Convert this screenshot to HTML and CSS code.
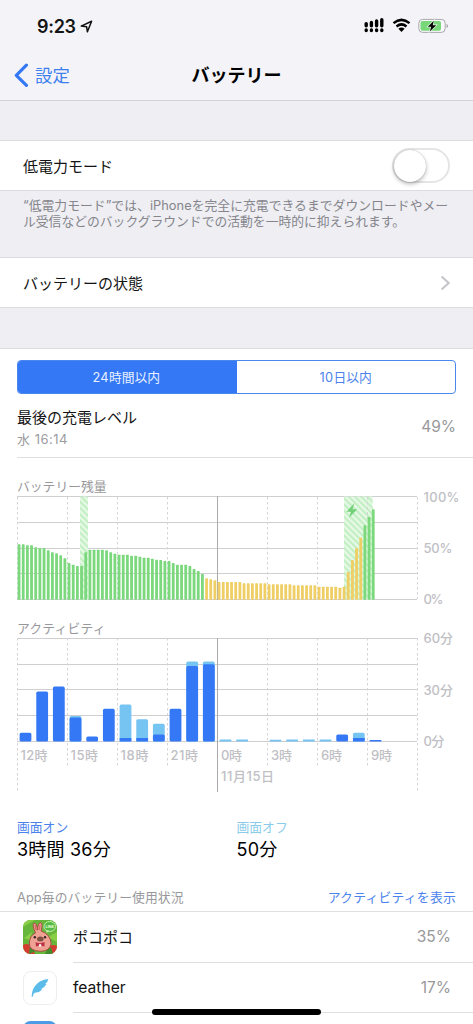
FILE: index.html
```html
<!DOCTYPE html>
<html lang="ja">
<head>
<meta charset="utf-8">
<title>バッテリー</title>
<link rel="stylesheet" href="styles.css">
</head>
<body>
<div class="screen">
  <header class="top">
    <div class="status">
      <div class="clock"><span>9:23</span>
        <svg width="13" height="13" viewBox="0 0 13 13"><path d="M1.2 6.1 11.6 1.2 7.4 11.8 6.6 6.7Z" fill="none" stroke="#111" stroke-width="1.5" stroke-linejoin="round"/></svg>
      </div>
      <div class="indicators">
        <svg width="21" height="15" viewBox="0 0 21 15"><path d="M2.2 5.6V7.8M7.4 4.5V7.8M12.6 3V7.8M17.8 1.8V7.8M2.2 12V12.6M7.4 12V12.6M12.6 12V12.6M17.8 12V12.6" stroke="#000" stroke-width="3.4" stroke-linecap="round"/></svg>
        <svg width="19" height="15" viewBox="0 0 19 15"><path d="M1.5 5.1Q9.5-1.4 17.5 5.1M4.5 8.4Q9.5 4.4 14.5 8.4" fill="none" stroke="#000" stroke-width="2.5"/><path d="M6.4 10.7Q9.5 8.3 12.6 10.7L9.5 14Z"/></svg>
        <svg width="31" height="16" viewBox="0 0 31 16"><rect x=".8" y="1.4" width="26.4" height="13" rx="3.8" fill="#f8f8fa" stroke="#a8a8ad"/><rect x="2.5" y="3.1" width="20.5" height="9.6" rx="2" fill="#78d779"/><path d="M28.5 6v4q1.7-.6 1.7-2T28.5 6Z" fill="#a8a8ad"/><path d="M15.8 2.7 9.8 8.7H13.2L11.8 13.4 18.2 7.2H14.7Z" stroke="#e9f8e9" stroke-width="1.3" paint-order="stroke"/></svg>
      </div>
    </div>
    <nav class="nav">
      <a class="back"><svg width="15" height="25" viewBox="0 0 15 25"><path d="M12.4 2.2 2.3 12.3 12.4 22.4" fill="none" stroke="#3478f6" stroke-width="3.2" stroke-linecap="round" stroke-linejoin="round"/></svg><span>設定</span></a>
      <h1>バッテリー</h1>
    </nav>
  </header>

  <section class="group first">
    <div class="row"><span>低電力モード</span><span class="switch"><span class="knob"></span></span></div>
  </section>
  <p class="note"><span class="wide">“低電力モード”では、iPhoneを完全に充電できるまでダウンロードやメー</span><br>ル受信などのバックグラウンドでの活動を一時的に抑えられます。</p>
  <section class="group">
    <div class="row"><span>バッテリーの状態</span><svg class="chevron" width="11" height="16" viewBox="0 0 11 16"><path d="M1.6 1.4 8.7 8 1.6 14.6" fill="none" stroke="#c5c5ca" stroke-width="2.1"/></svg></div>
  </section>

  <main class="usage">
    <div class="segments"><span class="selected"><b>24</b>時間以内</span><span><b>10</b>日以内</span></div>
    <div class="level">
      <div><div class="name">最後の充電レベル</div><div class="when">水 16:14</div></div>
      <span class="percent">49%</span>
    </div>
    <h2 class="charge-title">バッテリー残量</h2>
    <svg class="plot" id="charge" width="473" height="108" viewBox="0 492 473 108">
      <defs><pattern id="hatch" width="4.4" height="4.4" patternUnits="userSpaceOnUse" patternTransform="rotate(-45)"><rect width="4.4" height="4.4" fill="#e6f9e6"/><rect width="2.1" height="4.4" fill="#c2efc2"/></pattern></defs>
      <g class="grid"><path d="M17 496.5H417M17 522.5H417M17 548.5H417M17 573.5H417M17 599.5H417"/>
      <path class="dash" d="M17.5 497V599M67.5 497V599M117.5 497V599M167.5 497V599M267.5 497V599M317.5 497V599M367.5 497V599M417.5 497V599"/><path class="midnight" d="M217.5 496V600"/></g>
      <rect x="80" y="496.5" width="8" height="103" fill="url(#hatch)"/><rect x="344" y="496.5" width="28.7" height="103" fill="url(#hatch)"/>
      <path class="dash" d="M367.5 497V520"/>
      <path d="M354.3 503.3 346.5 511.7H351L349 517.7 357.2 509.2H352.5Z" fill="#71d078"/>
      <g id="charge-bars"></g>
      <g class="axis"><text x="423.5" y="501.5" textLength="36">100%</text><text x="423.5" y="553" textLength="29">50%</text><text x="423.5" y="604.3" textLength="20">0%</text></g>
    </svg>
    <h2 class="activity-title">アクティビティ</h2>
    <svg class="plot" width="473" height="157" viewBox="0 636 473 157">
      <g class="grid"><path d="M17 638.5H417M17 664.5H417M17 689.5H417M17 715.5H417M17 741.5H417"/>
      <path class="dash" d="M17.5 638V792M67.5 638V767M117.5 638V767M167.5 638V767M267.5 638V767M317.5 638V767M367.5 638V767M417.5 638V792"/><path class="midnight" d="M217.5 638V792"/></g>
      <g id="activity-bars"></g>
      <g class="axis"><text x="423.5" y="643.4" textLength="29.5">60分</text><text x="423.5" y="694.9" textLength="29.5">30分</text><text x="423.5" y="746.4" textLength="21">0分</text>
      <text x="20.5" y="760.2" textLength="27">12時</text><text x="70.5" y="760.2" textLength="27.5">15時</text><text x="120.5" y="760.2" textLength="28">18時</text><text x="170.5" y="760.2" textLength="27.5">21時</text><text x="221" y="760.2" textLength="21">0時</text><text x="271" y="760.2" textLength="21">3時</text><text x="321" y="760.2" textLength="21">6時</text><text x="371" y="760.2" textLength="21">9時</text><text x="221" y="781" textLength="53">11月15日</text></g>
    </svg>
    <div class="totals">
      <div><div class="label on">画面オン</div><div class="value">3時間 36分</div></div>
      <div><div class="label off">画面オフ</div><div class="value">50分</div></div>
    </div>
    <div class="list-head"><span>App毎のバッテリー使用状況</span><a>アクティビティを表示</a></div>
    <ul class="apps">
      <li>
        <svg class="icon" width="34" height="34" viewBox="0 0 34 34">
          <defs><clipPath id="tile"><rect width="34" height="34" rx="7.5"/></clipPath></defs>
          <g clip-path="url(#tile)"><rect width="34" height="34" fill="#66b63b"/><path d="M0 7 12 0H0ZM1 18 9 12 7 20ZM25 17 34 12V22Z" fill="#8ace46"/>
          <path d="M0 25Q5 22 9 27L12 34H0ZM34 26Q28 23 24 30L26 34H34Z" fill="#d63c32"/><path d="M7 25l6 6-7 3ZM24 30l4-3 2 7h-8Z" fill="#418c2c"/>
          <path d="M12.5 13Q9 5 10.7 3.3Q13.5 2 14.5 10.2Q15 2 18 2.7Q20 4 18 11Q27.5 14 28.2 24Q26 31.4 17.5 31.3Q6 31 6.3 23Q7 15 12.5 13Z" fill="#efa293" stroke="#a84e43" stroke-width="1"/>
          <path d="M12 5l1.2 5M17 5l-.7 5" stroke="#d76c68" stroke-width="1.4"/><ellipse cx="17.3" cy="19" rx="3.3" ry="2.5" fill="#805045"/><circle cx="11.8" cy="17.3" r="1.2" fill="#352522"/><circle cx="22" cy="17.3" r="1.2" fill="#352522"/><path d="M12.5 22.3 17 23.2 21.5 22V26.5L17 25.5 13 26.5Z" fill="#bc3348"/><path d="M16 24.3h2.2v2.2H16Z" fill="#fff"/>
          <ellipse cx="26.7" cy="6.5" rx="5.8" ry="5" fill="#55bb44" stroke="#c1edaa"/><path d="M24 10 23 13 27 11Z" fill="#c1edaa"/><text x="22.6" y="8" class="badge">LINE</text></g>
        </svg>
        <div class="app"><span>ポコポコ</span><span class="share">35%</span></div>
      </li>
      <li>
        <svg class="icon" width="34" height="34" viewBox="0 0 34 34"><rect x=".5" y=".5" width="33" height="33" rx="7.5" fill="#fff" stroke="#eeeef0"/><path d="M8.7 26Q8.5 20 11.8 15.2Q16 9 25.4 8Q24.7 11.2 22.2 13L23.5 13.1Q21.8 16.6 17.8 18.2L19.4 18.5Q16 22 11.6 21.8Q10.2 23.4 9.5 26Z" fill="#5cbce9"/></svg>
        <div class="app"><span class="latin">feather</span><span class="share">17%</span></div>
      </li>
      <li><svg class="icon next" width="34" height="34" viewBox="0 0 34 34"><rect width="34" height="34" rx="7.5" fill="#4c9be5"/></svg></li>
    </ul>
  </main>
  <div class="home"></div>
</div>
<script src="charts.js"></script>
</body>
</html>
```
FILE: styles.css
```css
* { box-sizing: border-box; }
body { margin: 0; background: #efeff4; color: #141414; font-family: Inter, "Noto Sans CJK JP", sans-serif; }
.screen { position: relative; width: 473px; height: 1024px; overflow: hidden; background: #eeeef3; }
.top { height: 101px; background: #f4f4f8; border-bottom: 1px solid #d2d2d7; }
.status { display: flex; justify-content: space-between; height: 50px; padding: 18px 24px 0 37px; }
.clock { display: flex; gap: 4px; font-size: 18px; font-weight: 600; line-height: 17px; letter-spacing: -.3px; }
.clock svg { margin-top: 2px; }
.indicators { display: flex; gap: 7px; }
.nav { display: grid; grid-template-columns: 1fr auto 1fr; align-items: center; height: 50px; padding-left: 14px; padding-right: 14px; }
.back { display: flex; align-items: center; gap: 6px; color: #3e7fee; font-size: 17.4px; line-height: 25px; }
h1 { margin: 0; font-size: 18px; font-weight: 600; line-height: 25px; color: #000; }
.group { background: #fff; border-top: 1px solid #dcdce0; border-bottom: 1px solid #dcdce0; }
.first { margin-top: 39px; }
.row { display: flex; justify-content: space-between; align-items: center; height: 49px; padding: 0 23px; font-size: 15px; }
.switch { width: 58px; height: 35px; border: 2px solid #e5e5e7; border-radius: 18px; }
.knob { display: block; width: 32px; height: 32px; border-radius: 50%; background: #fff; box-shadow: 0 2px 4px rgba(0,0,0,.28), 0 0 1px rgba(0,0,0,.3); }
.note { height: 66px; margin: 0; padding: 7px 0 0 23px; font-size: 12.8px; line-height: 16px; color: #85858b; white-space: nowrap; }
.wide { letter-spacing: .04px; }
.chevron { margin-right: -1px; }
.usage { margin-top: 40px; height: 676px; background: #fff; border-top: 1px solid #dcdce0; }
.segments { display: grid; grid-template-columns: 1fr 1fr; width: 439px; height: 34px; margin: 11px 0 0 17px; border: 1px solid #4b88ed; border-radius: 4px; overflow: hidden; font-size: 12.8px; line-height: 33px; text-align: center; color: #4b82eb; }
.segments b { font-weight: 400; letter-spacing: .3px; }
.segments .selected { padding-right: 2px; background: #3478f6; color: #e9f1ff; }
.level { display: flex; justify-content: space-between; height: 64px; margin-left: 17px; padding: 13px 17px 0 0; border-bottom: 1px solid #dfdfe2; }
.name { font-size: 15px; line-height: 22px; }
.when { font-size: 13px; line-height: 21px; color: #9c9c9f; letter-spacing: .5px; }
.percent, .share { color: #98989b; font-size: 15.5px; }
.percent { margin-top: 10px; line-height: 20px; }
h2 { margin: 0; padding-left: 17px; font-size: 12.8px; font-weight: 400; color: #98989b; line-height: 20px; }
.charge-title { height: 34px; padding-top: 19px; }
.activity-title { height: 36px; padding-top: 19px; letter-spacing: .2px; }
.plot { display: block; overflow: visible; }
.grid path { fill: none; stroke: #cfcfd2; stroke-width: 1; }
.grid .dash, .dash { stroke: #d4d4d8; stroke-width: 1; stroke-dasharray: 2.5 2.5; }
.grid .midnight { stroke: #aaaaad; }
.axis { fill: #c0c0c5; font-size: 13px; font-weight: 500; }
.green { fill: #7bd87c; }
.yellow { fill: #efcf65; }
.dark { fill: #3478f6; }
.light { fill: #75c4f2; }
.totals { display: grid; grid-template-columns: 219.5px 1fr; height: 94px; padding: 25px 0 0 17px; }
.label { font-size: 12.8px; line-height: 20px; }
.on { color: #4b82eb; }
.off { color: #8bcceb; }
.value { font-size: 18px; line-height: 24px; letter-spacing: .2px; color: #000; }
.list-head { display: flex; justify-content: space-between; height: 25px; padding: 1px 17px 0; border-bottom: 1px solid #dfdfe2; font-size: 12.8px; line-height: 20px; letter-spacing: .1px; color: #98989b; }
.list-head a { color: #4b82eb; letter-spacing: .25px; }
.apps { list-style: none; margin: 0; padding: 0 0 0 23px; }
.apps li { display: flex; align-items: center; gap: 16px; height: 50.5px; }
.icon { display: block; flex: none; }
.next { align-self: flex-start; margin-top: 8px; }
.app { display: flex; flex: 1; justify-content: space-between; align-items: center; height: 50.5px; padding-right: 22px; border-bottom: 1px solid #dfdfe2; font-size: 15px; }
.latin { font-size: 15.6px; }
.badge { font-size: 3.8px; font-weight: 700; fill: #e8ffdf; }
.home { position: absolute; left: 152px; top: 1009px; width: 169px; height: 6px; border-radius: 3px; background: #000; }
```
FILE: charts.js
```js
const NS = "http://www.w3.org/2000/svg";

function bar(parent, x, y, width, height, name, radius) {
  const rect = document.createElementNS(NS, "rect");
  const values = { x, y, width, height, rx: radius, class: name };
  for (const key in values) rect.setAttribute(key, values[key]);
  parent.appendChild(rect);
}

// Charge level for each quarter hour, in thirds of a pixel above the axis.
const charge = [
  166, 166, 163, 163, 157, 155, 155, 148, 142, 139, 133, 124, 110, 105, 101, 101,
  142, 150, 150, 150, 150, 148, 142, 138, 135, 135, 135, 132, 132, 129, 126, 126,
  123, 120, 119, 116, 116, 110, 105, 105, 105, 101, 92, 86, 77, 64, 61, 58,
  53, 53, 53, 53, 53, 53, 49, 49, 49, 49, 49, 49, 46, 46, 46, 46, 46, 46,
  43, 43, 43, 43, 43, 43, 39, 39, 39, 39, 39, 36, 39, 83, 119, 155, 186, 223, 248, 271
];
const chargeBars = document.getElementById("charge-bars");
charge.forEach((value, i) => {
  const height = value / 3;
  bar(chargeBars, 17.65 + i * 4.167, 599.7 - height, 2.8, height, i < 45 || i > 82 ? "green" : "yellow", 0.6);
});

// Hourly activity: total height and screen-on height in pixels.
const activity = [
  [8.8, 8.8], [50, 50], [55, 55], [25.6, 24], [5.2, 5.2], [32.8, 32.8],
  [37, 3.6], [22.4, 3.6], [17.8, 7.2], [32.8, 32.8], [80, 75.5], [80, 77.4],
  [2.2, 0], [2.2, 0], [0, 0], [1.8, 0], [2, 0], [2, 0],
  [2.2, 0], [7.2, 7.2], [8.8, 3.6], [1.7, 1.7]
];
const activityBars = document.getElementById("activity-bars");
activity.forEach(([total, on], i) => {
  const x = 19.6 + i * 16.667;
  if (total > on) bar(activityBars, x, 741.6 - total, 11.8, total, "light", total > 4 ? 1.6 : 0.5);
  if (on) bar(activityBars, x, 741.6 - on, 11.8, on, "dark", on > 4 ? 1.6 : 0.5);
});
```
